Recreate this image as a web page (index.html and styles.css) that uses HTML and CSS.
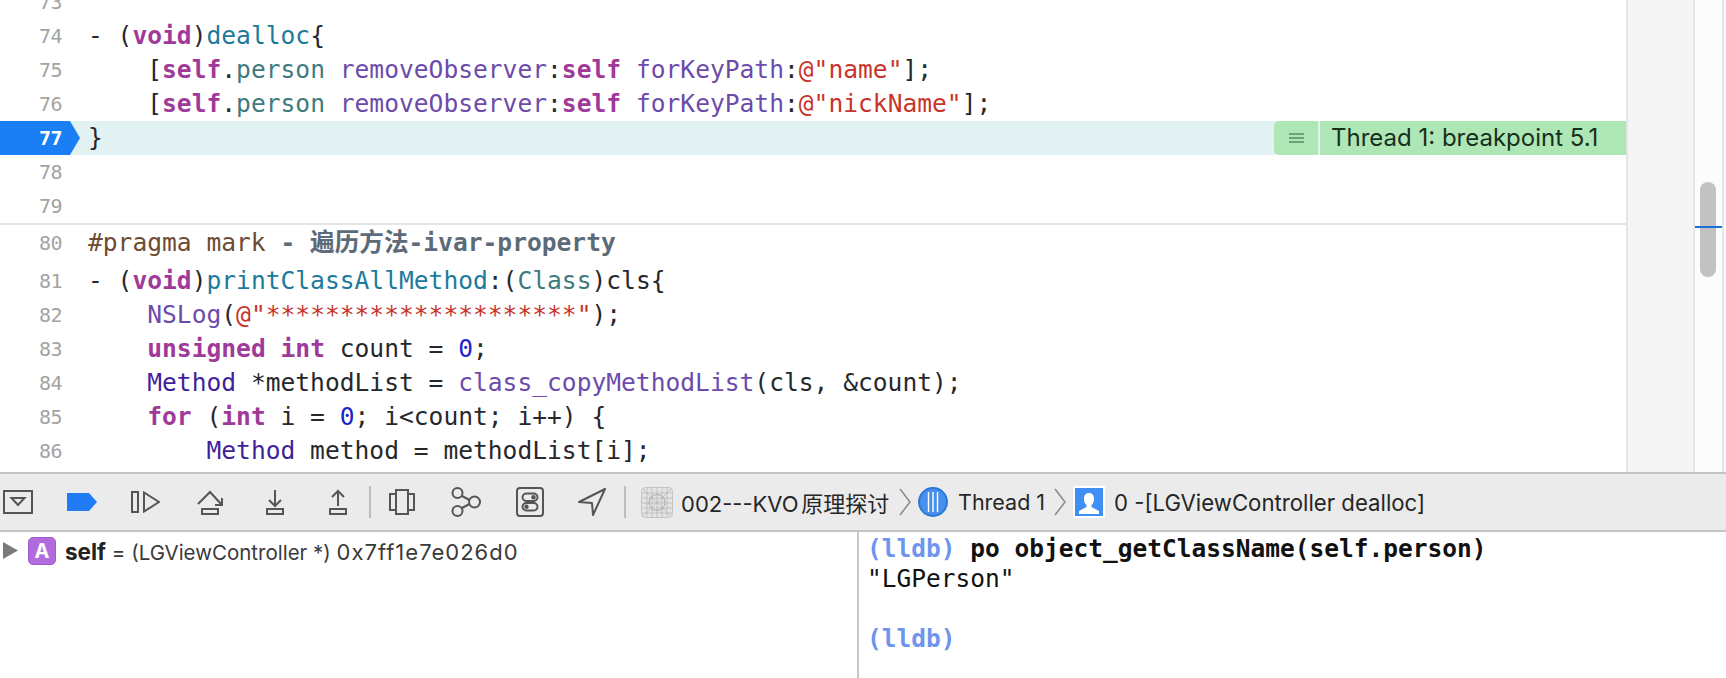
FILE: index.html
```html
<!DOCTYPE html>
<html lang="zh">
<head>
<meta charset="utf-8">
<title>Xcode debugger</title>
<link rel="stylesheet" href="styles.css">
</head>
<body>
<div class="editor">
  <div class="code">
    <div class="lines">
      <div class="line"><span class="num">73</span><span class="src"></span></div>
      <div class="line"><span class="num">74</span><span class="src">- (<b class="kw">void</b>)<span class="def">dealloc</span>{</span></div>
      <div class="line"><span class="num">75</span><span class="src">    [<b class="kw">self</b>.<span class="prop">person</span> <span class="fn">removeObserver</span>:<b class="kw">self</b> <span class="fn">forKeyPath</span>:<span class="str">@"name"</span>];</span></div>
      <div class="line"><span class="num">76</span><span class="src">    [<b class="kw">self</b>.<span class="prop">person</span> <span class="fn">removeObserver</span>:<b class="kw">self</b> <span class="fn">forKeyPath</span>:<span class="str">@"nickName"</span>];</span></div>
      <div class="line current"><span class="marker"><span class="num">77</span></span><span class="src">}</span><div class="badge"><span class="badge-btn"><svg width="15" height="10" viewBox="0 0 15 10"><path d="M0 1h15M0 5h15M0 9h15" stroke="#5f8a66" stroke-width="1.6"/></svg></span><span class="badge-msg">Thread 1: breakpoint 5.1</span></div></div>
      <div class="line"><span class="num">78</span><span class="src"></span></div>
      <div class="line"><span class="num">79</span><span class="src"></span></div>
      <div class="line mark"><span class="num">80</span><span class="src"><span class="pragma">#pragma mark</span> <b class="marktext">- 遍历方法-ivar-property</b></span></div>
      <div class="line"><span class="num">81</span><span class="src">- (<b class="kw">void</b>)<span class="def">printClassAllMethod</span>:(<span class="prop">Class</span>)cls{</span></div>
      <div class="line"><span class="num">82</span><span class="src">    <span class="fn">NSLog</span>(<span class="str">@"*********************"</span>);</span></div>
      <div class="line"><span class="num">83</span><span class="src">    <b class="kw">unsigned</b> <b class="kw">int</b> count = <span class="lit">0</span>;</span></div>
      <div class="line"><span class="num">84</span><span class="src">    <span class="type">Method</span> *methodList = <span class="fn">class_copyMethodList</span>(cls, &amp;count);</span></div>
      <div class="line"><span class="num">85</span><span class="src">    <b class="kw">for</b> (<b class="kw">int</b> i = <span class="lit">0</span>; i&lt;count; i++) {</span></div>
      <div class="line"><span class="num">86</span><span class="src">        <span class="type">Method</span> method = methodList[i];</span></div>
    </div>
  </div>
  <div class="gutter"></div>
  <div class="minimap"><div class="thumb"></div><div class="pos"></div></div>
</div>
<div class="toolbar">
  <svg class="ico i-hide" width="30" height="24" viewBox="0 0 30 24"><rect x="1" y="1" width="28" height="22" fill="none" stroke="#555" stroke-width="2"/><path d="M8.500 8h13L15 15z" fill="none" stroke="#555" stroke-width="2"/></svg>
  <svg class="ico i-bp" width="30" height="18" viewBox="0 0 30 18"><path d="M0 0h22l8 9-8 9H0z" fill="#1f7cf5"/></svg>
  <svg class="ico i-cont" width="29" height="22" viewBox="0 0 29 22"><rect x="1" y="1" width="6" height="20" fill="none" stroke="#555" stroke-width="2"/><path d="M13 1.500v19L28 11z" fill="none" stroke="#555" stroke-width="2"/></svg>
  <svg class="ico i-over" width="27" height="26" viewBox="0 0 27 26"><path d="M1 15 13 3l12 13M25 9v7h-7" fill="none" stroke="#555" stroke-width="2"/><rect x="5" y="20" width="16" height="5" fill="none" stroke="#555" stroke-width="2"/></svg>
  <svg class="ico i-in" width="18" height="26" viewBox="0 0 18 26"><path d="M9 1v16M3 11l6 6 6-6" fill="none" stroke="#555" stroke-width="2"/><rect x="1" y="20" width="16" height="5" fill="none" stroke="#555" stroke-width="2"/></svg>
  <svg class="ico i-out" width="18" height="26" viewBox="0 0 18 26"><path d="M9 17V2M3 8l6-6 6 6" fill="none" stroke="#555" stroke-width="2"/><rect x="1" y="20" width="16" height="5" fill="none" stroke="#555" stroke-width="2"/></svg>
  <span class="tsep s1"></span>
  <svg class="ico i-view" width="26" height="26" viewBox="0 0 26 26"><rect x="7" y="1" width="12" height="24" fill="none" stroke="#555" stroke-width="2"/><path d="M7 5H1v16h6M19 5h6v16h-6" fill="none" stroke="#555" stroke-width="2"/></svg>
  <svg class="ico i-mem" width="30" height="30" viewBox="0 0 30 30"><circle cx="6.500" cy="6" r="5" fill="none" stroke="#555" stroke-width="2"/><circle cx="6.500" cy="24" r="5" fill="none" stroke="#555" stroke-width="2"/><circle cx="23.500" cy="15" r="5.500" fill="none" stroke="#555" stroke-width="2"/><path d="M11 9l7.500 4M11 21l7.500-4" fill="none" stroke="#555" stroke-width="2"/></svg>
  <svg class="ico i-env" width="28" height="30" viewBox="0 0 28 30"><rect x="1" y="1" width="26" height="28" rx="3" fill="none" stroke="#555" stroke-width="2"/><rect x="6.500" y="6.500" width="15" height="7.500" rx="3.700" fill="none" stroke="#555" stroke-width="2"/><rect x="6.500" y="16" width="15" height="7.500" rx="3.700" fill="none" stroke="#555" stroke-width="2"/><circle cx="17.500" cy="10.200" r="2.200" fill="#555"/><circle cx="10.500" cy="19.700" r="2.200" fill="#555"/></svg>
  <svg class="ico i-loc" width="28" height="28" viewBox="0 0 28 28"><path d="M27 1 1 14l13 1 1 12z" fill="none" stroke="#555" stroke-width="2" stroke-linejoin="round"/></svg>
  <span class="tsep s2"></span>
  <svg class="crumb-ico i-app" width="32" height="31" viewBox="0 0 32 31"><rect x=".5" y=".5" width="31" height="30" rx="4" fill="#e4e4e4" stroke="#c4c4c4"/><path d="M6 1v29M11 1v29M16 1v29M21 1v29M26 1v29M1 6h30M1 11h30M1 16h30M1 21h30M1 26h30M2 2l28 27M30 2 2 29" stroke="#b5b5b5" stroke-width=".7"/><circle cx="16" cy="15.500" r="8" fill="none" stroke="#aaa"/></svg>
  <span class="crumb c-app">002---KVO原理探讨</span>
  <svg class="chev" width="12" height="32" viewBox="0 0 12 32"><path d="M1 3l10 13L1 29" fill="none" stroke="#8a8a8a" stroke-width="1.500"/></svg>
  <svg class="crumb-ico i-thread" width="30" height="30" viewBox="0 0 30 30"><circle cx="15" cy="15" r="14" fill="#4a90ea" stroke="#2a78d8" stroke-width="2"/><path d="M10.500 5v20M15 5v20M19.500 5v20" stroke="#fff" stroke-width="1.400"/></svg>
  <span class="crumb c-thread">Thread 1</span>
  <svg class="chev" width="12" height="32" viewBox="0 0 12 32"><path d="M1 3l10 13L1 29" fill="none" stroke="#8a8a8a" stroke-width="1.500"/></svg>
  <svg class="crumb-ico i-person" width="32" height="32" viewBox="0 0 32 32"><rect width="32" height="32" fill="#fff"/><rect x="2" y="2" width="28" height="28" fill="#3f8ff5"/><path d="M16 7c3.500 0 5 2.500 5 6s-1.500 5-2.500 6v2l7.500 4v3H6v-3l7.500-4v-2c-1-1-2.500-2.500-2.500-6s1.500-6 5-6z" fill="#fff"/></svg>
  <span class="crumb c-frame">0 -[LGViewController dealloc]</span>
</div>
<div class="debug">
  <div class="vars">
    <svg class="disclose" width="15" height="17" viewBox="0 0 15 17"><path d="M0 0l15 8.500L0 17z" fill="#7b7b7b"/></svg>
    <span class="badge-a">A</span>
    <span class="var"><b>self</b> = <span class="vtype">(LGViewController *)</span> <span class="vval">0x7ff1e7e026d0</span></span>
  </div>
  <div class="console">
    <div class="cline"><b class="prompt">(lldb)</b> <b>po object_getClassName(self.person)</b></div>
    <div class="cline">"LGPerson"</div>
    <div class="cline">&nbsp;</div>
    <div class="cline"><b class="prompt">(lldb)</b></div>
  </div>
</div>
</body>
</html>
```
FILE: styles.css
```css
html, body { margin: 0; padding: 0; }
body { width: 1726px; height: 678px; overflow: hidden; background: #fff; display: flex; flex-direction: column; font-family: Inter, "Liberation Sans", sans-serif; }
b { font-weight: 700; }

.editor { height: 472px; display: flex; flex: none; overflow: hidden; }
.code { width: 1626px; flex: none; overflow: hidden; }
.lines { margin-top: -15px; }
.line { height: 34px; display: flex; align-items: center; font: 24.6px/34px "DejaVu Sans Mono", "Noto Sans CJK SC", monospace; color: #26282b; white-space: pre; position: relative; }
.num { width: 62px; flex: none; text-align: right; font-size: 20px; letter-spacing: -0.6px; color: #a3a3a3; }
.src { margin-left: 26px; }
.current { background: #e2f2f3; }
.marker { width: 80px; height: 34px; flex: none; background: #1a7ff5; clip-path: polygon(0 0, 70px 0, 80px 50%, 70px 100%, 0 100%); display: block; }
.marker .num { display: block; color: #fff; width: 62px; font-weight: 700; }
.current .src { margin-left: 8px; }
.mark { height: 35px; padding-bottom: 2px; border-top: 2px solid #e5e5e5; margin-bottom: 2px; }
.kw { color: #a03a9a; }
.def { color: #1c7a9c; }
.prop { color: #3e7a7e; }
.fn { color: #6c4bab; }
.type { color: #3f1f9c; }
.str { color: #c9342a; }
.lit { color: #1c24c9; }
.pragma { color: #6e4a30; }
.marktext { color: #5d6b78; }

.badge { position: absolute; left: 1274px; top: 0; width: 352px; height: 34px; display: flex; font: 24px/34px Inter, "Liberation Sans", sans-serif; }
.badge-btn { width: 44px; flex: none; background: #afe6b6; border-radius: 5px 0 0 5px; display: flex; align-items: center; justify-content: center; }
.badge-msg { flex: 1; margin-left: 2px; padding-left: 11px; background: #afe6b6; color: #17301c; }

.gutter { width: 65px; flex: none; background: #f5f5f5; border-left: 2px solid #e6e6e6; }
.minimap { width: 31px; flex: none; position: relative; border-left: 2px solid #e6e6e6; border-right: 2px solid #e6e6e6; box-sizing: border-box; margin-right: 1px; background: #fcfcfc; }
.thumb { position: absolute; left: 5px; top: 182px; width: 16px; height: 95px; border-radius: 8px; background: #c2c2c2; }
.pos { position: absolute; left: 0; right: 0; top: 226px; height: 2px; background: #1b6fd6; }

.toolbar { height: 60px; flex: none; box-sizing: border-box; background: #ebebeb; border-top: 2px solid #c4c4c4; border-bottom: 2px solid #c4c4c4; display: flex; align-items: center; }
.ico { flex: none; }
.i-hide { margin-left: 3px; }
.i-bp { margin-left: 34px; }
.i-cont { margin-left: 34px; }
.i-over { margin-left: 37px; }
.i-in { margin-left: 42px; }
.i-out { margin-left: 45px; }
.tsep { width: 2px; height: 32px; background: #bdbdbd; flex: none; }
.s1 { margin-left: 22px; }
.i-view { margin-left: 18px; }
.i-mem { margin-left: 36px; }
.i-env { margin-left: 35px; }
.i-loc { margin-left: 34px; }
.s2 { margin-left: 18px; }
.crumb-ico { flex: none; }
.i-app { margin-left: 15px; }
.crumb { font: 21.5px Inter, "Noto Sans CJK SC", sans-serif; color: #262626; white-space: nowrap; flex: none; }
.c-app { margin-left: 8px; width: 210px; font-size: 22px; text-autospace: normal; }
.chev { margin: 0 7px 0 8px; flex: none; }
.c-thread { margin-left: 10px; width: 88px; }
.c-frame { margin-left: 9px; font-size: 22.2px; }

.debug { flex: 1; display: flex; min-height: 0; }
.vars { width: 859px; flex: none; box-sizing: border-box; display: flex; align-items: flex-start; padding: 5px 0 0 3px; border-right: 2px solid #c8c8c8; }
.disclose { margin-top: 5px; flex: none; }
.badge-a { width: 28px; height: 28px; margin-left: 10px; border-radius: 5px; background: #b26bdc; border: 1px solid #a25bcc; box-sizing: border-box; color: #fff; font: 700 20px/26px Inter, sans-serif; text-align: center; flex: none; }
.var { margin-left: 9px; font: 20.5px/29px Inter, "Liberation Sans", sans-serif; color: #3a3a3a; white-space: pre; }
.var b { color: #222; font-size: 22.5px; }
.vval { font-size: 22px; letter-spacing: 1px; }
.console { flex: 1; padding: 2px 0 0 8px; font: 24.5px/30px "DejaVu Sans Mono", monospace; color: #111; }
.cline { white-space: pre; }
.prompt { color: #6f94ee; }
```
